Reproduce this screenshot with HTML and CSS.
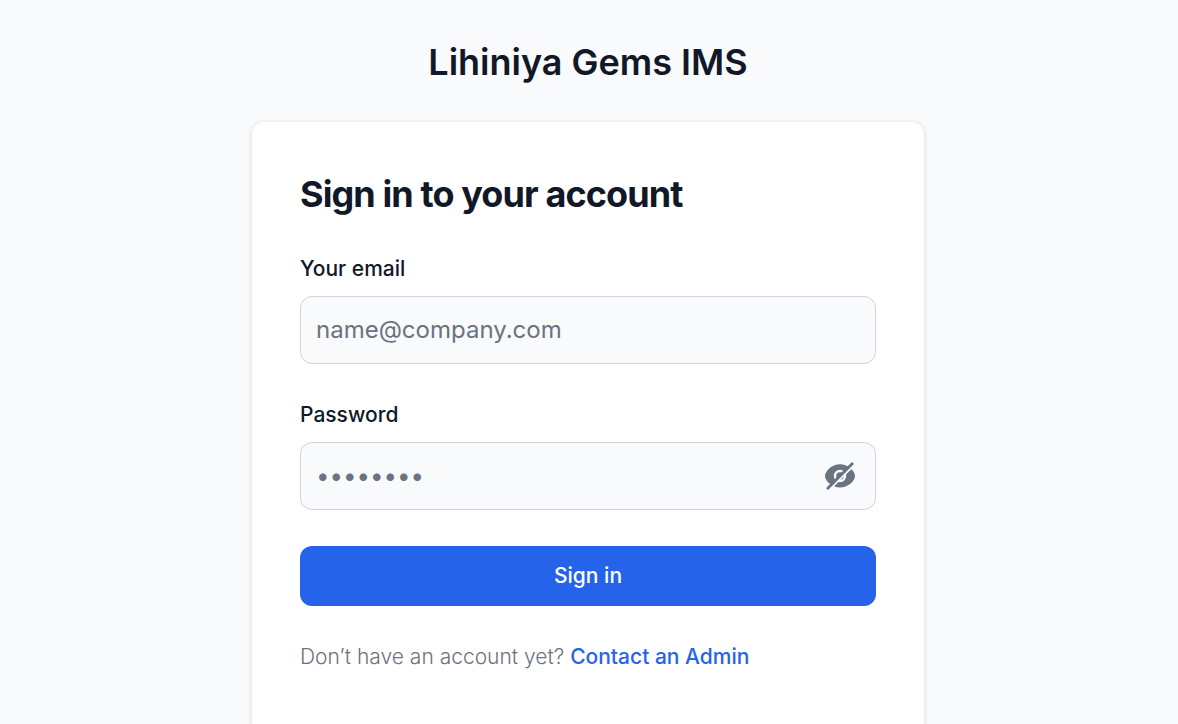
FILE: index.html
```html
<!DOCTYPE html>
<html lang="en">
<head>
<meta charset="utf-8">
<meta name="viewport" content="width=device-width, initial-scale=1">
<title>Lihiniya Gems IMS</title>
<link rel="stylesheet" href="styles.css">
</head>
<body>
<main class="page">
  <p class="brand">Lihiniya Gems IMS</p>
  <section class="card">
    <h1 class="title">Sign in to your account</h1>
    <form class="form">
      <div class="field">
        <label class="label" for="email">Your email</label>
        <input class="input" type="email" id="email" placeholder="name@company.com">
      </div>
      <div class="field">
        <label class="label" for="password">Password</label>
        <div class="password">
          <input class="input" type="password" id="password" placeholder="••••••••">
          <button class="toggle" type="button" aria-label="Show password">
            <svg class="icon" viewBox="0 0 36 36" fill="none" aria-hidden="true">
              <path fill="currentColor" d="M18 6.300C10.500 6.300 3 12.700 3 18s7.500 11.500 15 11.500S33 23.300 33 18 25.500 6.300 18 6.300Z"/>
              <circle class="gap" cx="18" cy="18" r="5" stroke-width="2.400"/>
              <path class="gap" stroke-width="2.200" d="M7.500 31.500 31.500 7.500"/>
              <path stroke="currentColor" stroke-width="2.800" stroke-linecap="round" d="M5.800 30.200 30.200 5.800"/>
            </svg>
          </button>
        </div>
      </div>
      <button class="submit" type="submit">Sign in</button>
      <p class="note">Don’t have an account yet? <a class="link" href="#">Contact an Admin</a></p>
    </form>
  </section>
</main>
</body>
</html>
```

FILE: styles.css
```css
* { box-sizing: border-box; margin: 0; }
body {
  background: #f9fafb;
  color: #111827;
  font-family: Inter, "Liberation Sans", sans-serif;
}
.page {
  display: flex;
  flex-direction: column;
  align-items: center;
  min-height: 100vh;
  padding: 38px 26px 0 24px;
}
.brand {
  margin-bottom: 36px;
  font-size: 36px;
  font-weight: 600;
  line-height: 48px;
}
.card {
  width: 100%;
  max-width: 672px;
  padding: 48px;
  border-radius: 12px;
  background: #fff;
  box-shadow: 0 1px 5px rgb(0 0 0 / 14%);
}
.title {
  margin-bottom: 36px;
  font-size: 36px;
  font-weight: 700;
  line-height: 48px;
  letter-spacing: -0.025em;
}
.form { display: flex; flex-direction: column; gap: 36px; padding-bottom: 36px; }
.label {
  display: block;
  margin-bottom: 12px;
  font-size: 21px;
  font-weight: 500;
  line-height: 30px;
}
.input {
  display: block;
  width: 100%;
  height: 68px;
  padding: 0 15px 2px;
  border: 1px solid #d1d5db;
  border-radius: 12px;
  background: #f9fafb;
  color: #111827;
  font: 400 24px/36px Inter, "Liberation Sans", sans-serif;
}
.input::placeholder { color: #6b7280; opacity: 1; }
.password { position: relative; }
.toggle {
  position: absolute;
  inset: 0 0 0 auto;
  display: flex;
  align-items: center;
  padding: 0 18px;
  border: 0;
  background: none;
  color: #6b7280;
}
.icon { width: 36px; height: 36px; }
.gap { stroke: #f9fafb; }
.submit {
  height: 60px;
  border: 0;
  border-radius: 12px;
  background: #2563eb;
  color: #fff;
  font: 500 21px/30px Inter, "Liberation Sans", sans-serif;
}
.note {
  color: #6b7280;
  font-size: 21px;
  font-weight: 300;
  line-height: 30px;
}
.link { color: #2563eb; font-weight: 500; text-decoration: none; }
.link:hover { text-decoration: underline; }
```
